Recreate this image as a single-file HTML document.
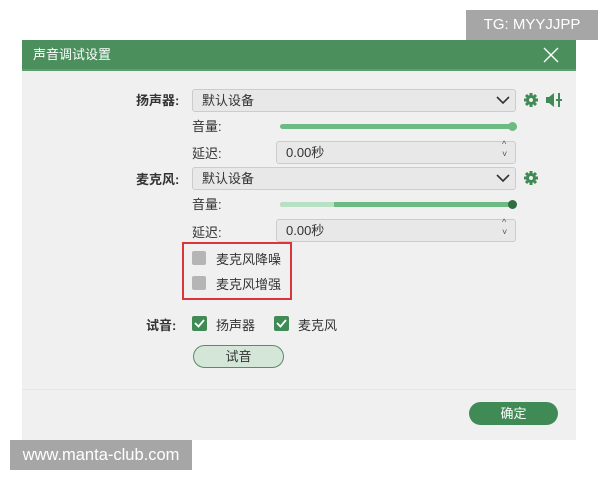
<!DOCTYPE html>
<html><head><meta charset="utf-8"><style>
*{margin:0;padding:0;box-sizing:border-box}
body{width:600px;height:480px;background:#fff;position:relative;font-family:"Liberation Sans","Noto Sans CJK SC",sans-serif;font-size:13px;color:#333;overflow:hidden}
.a{position:absolute}
.dlg{left:22px;top:40px;width:554px;height:400px;background:#f0f0f0}
.title{left:22px;top:40px;width:554px;height:31px;background:#4a8f5c;border-bottom:2px solid #5aa06c;color:#fff;font-size:13px;line-height:30px;padding-left:11px}
.dd{background:#e8e8e8;border:1px solid #ccc;border-radius:3px;padding-left:9px;line-height:21px}
.lbl{font-weight:bold;color:#333}
.cb{width:14px;height:14px;border-radius:2px;background:#b5b5b5}
.ck{width:15px;height:15px;border-radius:2px;background:#3f8a55}
</style></head><body>
<div class="a dlg"></div>
<div class="a title">声音调试设置</div>
<svg class="a" style="left:543px;top:47px" width="16" height="16"><path d="M1 1L15 15M15 1L1 15" stroke="#fff" stroke-width="1.4"/></svg>
<div class="a" style="left:466px;top:10px;width:132px;height:30px;background:#a6a6a6;color:#fff;font-size:15px;line-height:30px;text-align:center">TG: MYYJJPP</div>

<div class="a lbl" style="left:136px;top:90px">扬声器:</div>
<div class="a dd" style="left:192px;top:89px;width:324px;height:23px">默认设备</div>
<svg class="a" style="left:496px;top:95px" width="14" height="10"><path d="M1 2L7 8L13 2" stroke="#333" stroke-width="1.6" fill="none"/></svg>
<svg class="a" style="left:523px;top:92px" width="16" height="16" viewBox="0 0 16 16"><circle cx="8" cy="8" r="5" fill="#3f8a55"/><g stroke="#3f8a55" stroke-width="3"><path d="M8 1v14M1 8h14M3 3l10 10M13 3L3 13"/></g><circle cx="8" cy="8" r="2" fill="#f0f0f0"/></svg>
<svg class="a" style="left:545px;top:92px" width="18" height="16"><path d="M1 5h3l5-4v14l-5-4H1z" fill="#3f8a55"/><path d="M14 1v14M11 8h6" stroke="#3f8a55" stroke-width="2"/></svg>
<div class="a" style="left:192px;top:116px">音量:</div>
<div class="a" style="left:280px;top:124px;width:233px;height:5px;border-radius:3px;background:#6dbb82"></div>
<div class="a" style="left:508px;top:122px;width:9px;height:9px;border-radius:50%;background:#6dbb82"></div>
<div class="a" style="left:192px;top:143px">延迟:</div>
<div class="a dd" style="left:276px;top:141px;width:240px;height:23px">0.00秒</div>
<div class="a" style="left:502px;top:139px;font-size:9px;line-height:10px;color:#555">^<br>˅</div>

<div class="a lbl" style="left:136px;top:169px">麦克风:</div>
<div class="a dd" style="left:192px;top:167px;width:324px;height:23px">默认设备</div>
<svg class="a" style="left:496px;top:173px" width="14" height="10"><path d="M1 2L7 8L13 2" stroke="#333" stroke-width="1.6" fill="none"/></svg>
<svg class="a" style="left:523px;top:170px" width="16" height="16" viewBox="0 0 16 16"><circle cx="8" cy="8" r="5" fill="#3f8a55"/><g stroke="#3f8a55" stroke-width="3"><path d="M8 1v14M1 8h14M3 3l10 10M13 3L3 13"/></g><circle cx="8" cy="8" r="2" fill="#f0f0f0"/></svg>
<div class="a" style="left:192px;top:194px">音量:</div>
<div class="a" style="left:280px;top:202px;width:233px;height:5px;border-radius:3px;background:#6dbb82"></div>
<div class="a" style="left:280px;top:202px;width:54px;height:5px;border-radius:3px 0 0 3px;background:#b8e0c2"></div>
<div class="a" style="left:508px;top:200px;width:9px;height:9px;border-radius:50%;background:#2f6e42"></div>
<div class="a" style="left:192px;top:222px">延迟:</div>
<div class="a dd" style="left:276px;top:219px;width:240px;height:23px">0.00秒</div>
<div class="a" style="left:502px;top:217px;font-size:9px;line-height:10px;color:#555">^<br>˅</div>

<div class="a" style="left:182px;top:242px;width:110px;height:58px;border:2px solid #d9363b"></div>
<div class="a cb" style="left:192px;top:251px"></div>
<div class="a" style="left:216px;top:249px">麦克风降噪</div>
<div class="a cb" style="left:192px;top:276px"></div>
<div class="a" style="left:216px;top:274px">麦克风增强</div>

<div class="a lbl" style="left:146px;top:315px">试音:</div>
<div class="a ck" style="left:192px;top:316px"></div>
<svg class="a" style="left:194px;top:318px" width="11" height="11"><path d="M1 5l3.5 3.5L10 2" stroke="#fff" stroke-width="1.8" fill="none"/></svg>
<div class="a" style="left:216px;top:315px">扬声器</div>
<div class="a ck" style="left:274px;top:316px"></div>
<svg class="a" style="left:276px;top:318px" width="11" height="11"><path d="M1 5l3.5 3.5L10 2" stroke="#fff" stroke-width="1.8" fill="none"/></svg>
<div class="a" style="left:298px;top:315px">麦克风</div>
<div class="a" style="left:193px;top:345px;width:91px;height:23px;border:1px solid #5a8a67;border-radius:12px;background:#d3e6d8;text-align:center;line-height:21px">试音</div>

<div class="a" style="left:22px;top:389px;width:554px;height:1px;background:#e6e6e6"></div>
<div class="a" style="left:469px;top:402px;width:89px;height:23px;border-radius:12px;background:#3f8a55;color:#fff;text-align:center;line-height:23px">确定</div>

<div class="a" style="left:10px;top:440px;width:182px;height:30px;background:#a6a6a6;color:#fff;font-size:16.5px;line-height:30px;text-align:center">www.manta-club.com</div>
</body></html>
